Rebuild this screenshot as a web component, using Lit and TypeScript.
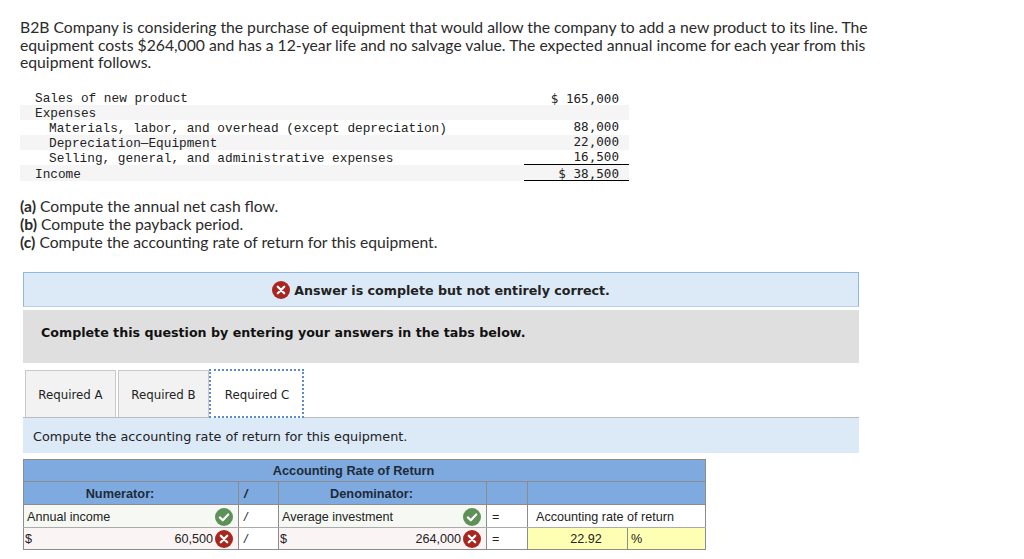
import { LitElement, html, css } from "lit";
import { customElement } from "lit/decorators.js";

const expenseRows = [
  { label: "Sales of new product", amount: "$ 165,000", indent: false },
  { label: "Expenses", amount: "", indent: false },
  { label: "Materials, labor, and overhead (except depreciation)", amount: "88,000", indent: true },
  { label: "Depreciation\u2014Equipment", amount: "22,000", indent: true },
  { label: "Selling, general, and administrative expenses", amount: "16,500", indent: true },
  { label: "Income", amount: "$ 38,500", indent: false, total: true },
];

const crossIcon = html`<svg class="icon" width="18" height="18" viewBox="0 0 18 18">
  <circle cx="9" cy="9" r="9" fill="#a8261f"></circle>
  <path d="M5.8 5.8l6.4 6.4M12.2 5.8l-6.4 6.4" stroke="#fff" stroke-width="2.3" stroke-linecap="round" fill="none"></path>
</svg>`;

const checkIcon = html`<svg class="icon" width="18" height="18" viewBox="0 0 18 18">
  <circle cx="9" cy="9" r="9" fill="#5e9158"></circle>
  <path d="M4.8 9.4l3 2.9 5.4-5.8" stroke="#fff" stroke-width="2.2" stroke-linecap="round" stroke-linejoin="round" fill="none"></path>
</svg>`;

@customElement("app-root")
export class AppRoot extends LitElement {
  static styles = css`
    :host {
      display: block;
      width: 1024px;
      height: 559px;
      overflow: hidden;
      background: #fff;
      color: #2b2b2b;
      font-family: "Lato", "Liberation Sans", sans-serif;
    }

    .page {
      display: flex;
      flex-direction: column;
      padding: 18px 0 0 20px;
    }

    .intro {
      width: 870px;
      height: 52px;
      font-size: 15.72px;
      line-height: 17.5px;
    }

    .expenses {
      width: 609px;
      margin-top: 20px;
      font-family: "Liberation Mono", monospace;
      font-size: 12.75px;
      color: #222;
    }

    .exp-row {
      display: flex;
      justify-content: space-between;
      height: 15px;
      line-height: 17px;
      padding-left: 15px;
    }

    .exp-row:nth-child(even) {
      background: #f5f5f5;
    }

    .exp-label.indent {
      padding-left: 14px;
    }

    .exp-amount {
      width: 105px;
      box-sizing: border-box;
      padding-right: 10px;
      text-align: right;
      font-family: "DejaVu Sans Mono", monospace;
      font-size: 12.6px;
    }

    .exp-row.indented .exp-amount {
      line-height: 13px;
    }

    .exp-row.total {
      height: 16px;
      line-height: 19px;
    }

    .exp-row.total .exp-amount {
      height: 17px;
      margin-top: -1px;
      border-top: 1px solid #000;
      border-bottom: 1px solid #000;
      line-height: 17px;
    }

    .parts {
      margin-top: 15.5px;
      font-size: 15.65px;
      line-height: 18px;
    }

    .parts b {
      font-weight: 700;
    }

    .answer {
      display: flex;
      align-items: center;
      justify-content: center;
      gap: 4px;
      box-sizing: border-box;
      width: 836px;
      height: 35px;
      margin: 21.5px 0 0 3px;
      padding-top: 1px;
      background: #dce9f7;
      border: 1px solid #8fb8de;
      border-bottom-color: #b9d0ea;
      font-family: "DejaVu Sans", sans-serif;
      font-size: 12.65px;
      font-weight: 700;
      color: #222;
    }

    .prompt {
      box-sizing: border-box;
      width: 836px;
      height: 53px;
      margin: 3px 0 0 3px;
      padding: 14px 0 0 18px;
      background: #dfdfdf;
      font-family: "DejaVu Sans", sans-serif;
      font-size: 12.65px;
      line-height: 17px;
      font-weight: 700;
      color: #111;
    }

    .tabs {
      display: flex;
      align-items: flex-end;
      gap: 2px;
      height: 54px;
      margin-left: 5px;
    }

    .tab {
      display: flex;
      align-items: center;
      justify-content: center;
      box-sizing: border-box;
      width: 91px;
      height: 47px;
      padding-top: 2px;
      background: #f2f2f2;
      border: 1px solid #c8c8c8;
      border-bottom: none;
      font-family: "DejaVu Sans", sans-serif;
      font-size: 11.8px;
      color: #222;
    }

    .tab.active {
      position: relative;
      z-index: 1;
      width: 95px;
      height: 49px;
      margin: 0 0 -1px -2px;
      padding-left: 1px;
      background: #fff;
      border: 2px dotted #5b8cc8;
    }

    .instruction {
      box-sizing: border-box;
      width: 836px;
      height: 36px;
      margin-left: 3px;
      padding: 10px 0 0 10px;
      background: #dce9f7;
      border-top: 1px solid #bdbdbd;
      font-family: "DejaVu Sans", sans-serif;
      font-size: 12.8px;
      line-height: 17px;
      color: #222;
    }

    table {
      width: 682px;
      margin: 6px 0 0 3px;
      border-collapse: collapse;
      table-layout: fixed;
      font-family: "Liberation Sans", sans-serif;
      font-size: 12.6px;
      color: #222;
    }

    td,
    th {
      height: 23px;
      padding: 0 5px 0 3px;
      border: 1px solid #8c8c8c;
      box-sizing: border-box;
      white-space: nowrap;
    }

    tr.short th,
    tr.short td {
      height: 22px;
    }

    tr.upper td {
      padding-top: 1px;
      border-bottom-color: #ababab;
    }

    th {
      padding-right: 25px;
      background: #7faadf;
      font-size: 12.75px;
      font-weight: 700;
      color: #1d2a3a;
    }

    td.good {
      background: #f6f8f4;
    }

    td.bad {
      padding-left: 1px;
      background: #faf4f4;
    }

    th.between,
    td.between {
      padding-right: 0;
      padding-left: 5px;
      text-align: left;
    }

    .slash {
      font-style: italic;
    }

    .split {
      display: flex;
      align-items: center;
      justify-content: space-between;
    }

    .end {
      display: flex;
      align-items: center;
      gap: 2px;
    }

    .icon {
      display: block;
      flex: none;
    }

    td.result {
      padding-left: 8px;
    }

    td.rate {
      padding-left: 22px;
      background: #ffffb3;
      text-align: center;
    }

    td.unit {
      background: #ffffb3;
    }
  `;

  render() {
    return html`
      <div class="page">
        <div class="intro">
          B2B Company is considering the purchase of equipment that would allow the company to add a new product to its line. The
          equipment costs $264,000 and has a 12-year life and no salvage value. The expected annual income for each year from this
          equipment follows.
        </div>

        <div class="expenses">
          ${expenseRows.map(
            (row) => html`<div class="exp-row ${row.total ? "total" : ""} ${row.indent ? "indented" : ""}">
              <span class="exp-label ${row.indent ? "indent" : ""}">${row.label}</span>
              <span class="exp-amount">${row.amount}</span>
            </div>`,
          )}
        </div>

        <div class="parts">
          <div><b>(a)</b> Compute the annual net cash flow.</div>
          <div><b>(b)</b> Compute the payback period.</div>
          <div><b>(c)</b> Compute the accounting rate of return for this equipment.</div>
        </div>

        <div class="answer">${crossIcon}<span>Answer is complete but not entirely correct.</span></div>
        <div class="prompt">Complete this question by entering your answers in the tabs below.</div>

        <div class="tabs">
          <div class="tab">Required A</div>
          <div class="tab">Required B</div>
          <div class="tab active">Required C</div>
        </div>
        <div class="instruction">Compute the accounting rate of return for this equipment.</div>

        <table>
          <colgroup>
            <col style="width: 215px" />
            <col style="width: 40px" />
            <col style="width: 208px" />
            <col style="width: 41px" />
            <col style="width: 100px" />
            <col style="width: 78px" />
          </colgroup>
          <tr class="short"><th colspan="6">Accounting Rate of Return</th></tr>
          <tr>
            <th>Numerator:</th>
            <th class="between slash">/</th>
            <th>Denominator:</th>
            <th></th>
            <th colspan="2"></th>
          </tr>
          <tr class="upper">
            <td class="good"><div class="split">Annual income ${checkIcon}</div></td>
            <td class="between slash">/</td>
            <td class="good"><div class="split">Average investment ${checkIcon}</div></td>
            <td class="between">=</td>
            <td class="result" colspan="2">Accounting rate of return</td>
          </tr>
          <tr class="short">
            <td class="bad"><div class="split">$ <span class="end">60,500 ${crossIcon}</span></div></td>
            <td class="between slash">/</td>
            <td class="bad"><div class="split">$ <span class="end">264,000 ${crossIcon}</span></div></td>
            <td class="between">=</td>
            <td class="rate">22.92</td>
            <td class="unit">%</td>
          </tr>
        </table>
      </div>
    `;
  }
}
